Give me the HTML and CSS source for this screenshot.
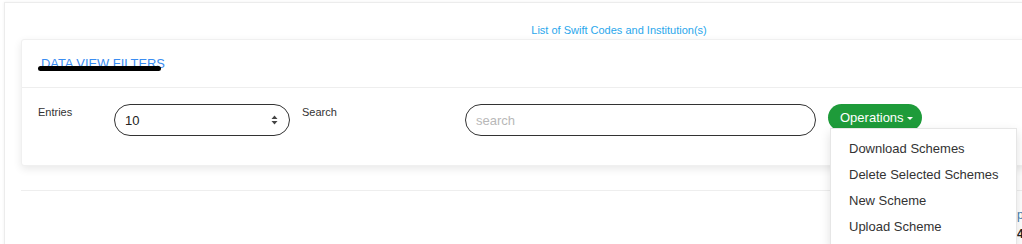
FILE: index.html
```html
<!DOCTYPE html>
<html>
<head>
<meta charset="utf-8">
<link rel="stylesheet" href="styles.css">
</head>
<body>
<div class="page">
  <div class="title">List of Swift Codes and Institution(s)</div>
  <div class="card">
    <div class="card-header">
      <span class="filters-title">DATA VIEW FILTERS</span>
      <span class="scribble"></span>
    </div>
    <div class="card-body">
      <div class="label">Entries</div>
      <div class="select">
        <span>10</span>
        <svg class="arrows" width="7" height="10" viewBox="0 0 7 10"><path d="M3.5 0.5 L6.5 4 L0.5 4 Z M3.5 9.5 L6.5 6 L0.5 6 Z" fill="#444"/></svg>
      </div>
      <div class="label search-label">Search</div>
      <div class="input"><span class="placeholder">search</span></div>
      <div class="ops">
        <div class="btn">Operations <span class="caret"></span></div>
        <ul class="menu">
          <li>Download Schemes</li>
          <li>Delete Selected Schemes</li>
          <li>New Scheme</li>
          <li>Upload Scheme</li>
        </ul>
      </div>
    </div>
  </div>
  <div class="table">
    <div class="cell head">p</div>
    <div class="cell num">4</div>
  </div>
</div>
</body>
</html>
```
FILE: styles.css
```css
html, body {
  margin: 0;
  padding: 0;
  overflow: hidden;
  background: #fff;
}
body {
  width: 1022px;
  height: 244px;
  font-family: "Liberation Sans", Arial, sans-serif;
  color: #333;
}
.page {
  margin: 2px 0 0 4px;
  width: 1230px;
  height: 300px;
  border: 1px solid #ececec;
  box-shadow: 0 0 3px rgba(0,0,0,0.06);
  box-sizing: border-box;
  padding: 20px 16px 0;
}
.title {
  text-align: center;
  font-size: 11px;
  line-height: 15px;
  color: #2aa7ec;
  margin-bottom: 1px;
}
.card {
  background: #fff;
  border: 1px solid #f0f0f0;
  border-radius: 3px;
  box-shadow: 0 3px 8px rgba(0,0,0,0.09);
}
.card-header {
  position: relative;
  padding: 15px 19px 16px;
  line-height: 15px;
  border-bottom: 1px solid #eeeeee;
}
.filters-title {
  font-size: 12.9px;
  color: #3a8df2;
}
.scribble {
  position: absolute;
  left: 16px;
  top: 26px;
  width: 123px;
  height: 5px;
  background: #000;
  border-radius: 3px;
}
.card-body {
  display: flex;
  align-items: flex-start;
  padding: 16px 16px 29px;
}
.label {
  font-size: 11px;
  line-height: 16px;
  width: 76px;
  color: #333;
}
.select {
  width: 176px;
  height: 32px;
  box-sizing: border-box;
  border: 1px solid #333;
  border-radius: 16px;
  display: flex;
  align-items: center;
  justify-content: space-between;
  padding: 0 11px 0 10px;
  font-size: 13px;
  color: #222;
}
.search-label {
  margin-left: 12px;
  width: 163px;
}
.input {
  width: 351px;
  height: 32px;
  box-sizing: border-box;
  border: 1px solid #333;
  border-radius: 16px;
  display: flex;
  align-items: center;
  padding: 0 10px;
  font-size: 13px;
}
.placeholder {
  color: #b8b8b8;
}
.ops {
  position: relative;
  margin-left: 12px;
}
.btn {
  height: 27px;
  line-height: 27px;
  padding: 0 9px 0 12px;
  background: #1e9b3a;
  color: #fff;
  font-size: 13px;
  border-radius: 14px;
  display: flex;
  align-items: center;
  gap: 3px;
}
.caret {
  width: 0;
  height: 0;
  border-left: 3px solid transparent;
  border-right: 3px solid transparent;
  border-top: 3px solid #fff;
  margin-top: 1px;
}
.menu {
  position: absolute;
  left: 2px;
  top: 24px;
  z-index: 5;
  width: 187px;
  margin: 0;
  padding: 7px 0;
  list-style: none;
  background: #fff;
  border: 1px solid #e6e6e6;
  box-shadow: 0 4px 10px rgba(0,0,0,0.12);
  box-sizing: border-box;
}
.menu li {
  font-size: 13px;
  line-height: 26px;
  padding-left: 18px;
  color: #333;
  white-space: nowrap;
}
.table {
  margin-top: 24px;
  border-top: 1px solid #eeeeee;
  padding: 15px 0 0 996px;
}
.cell {
  font-size: 12px;
  line-height: 19px;
}
.cell.head {
  color: #4a7fae;
}
.cell.num {
  color: #222;
  font-weight: bold;
}
```
